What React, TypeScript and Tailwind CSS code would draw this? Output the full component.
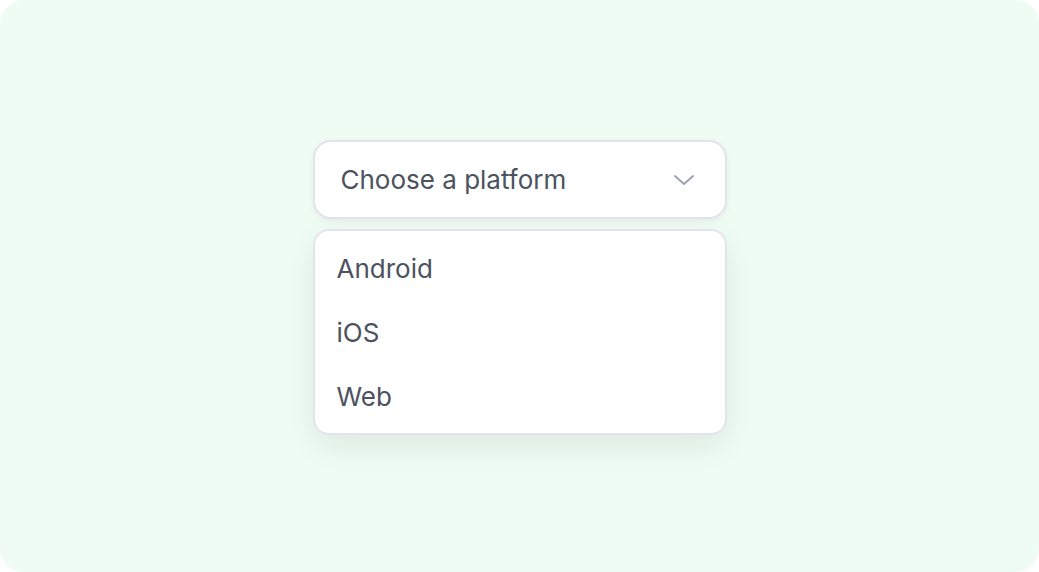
const OPTIONS = ['Android', 'iOS', 'Web'];

export default function App() {
  return (
    <div className="min-h-screen bg-white">
      <div
        className="flex h-[572px] w-[1039px] flex-col items-center rounded-[24px] bg-[#effcf3] pt-[140px]"
        style={{ fontFamily: 'Inter, "Noto Sans", sans-serif' }}
      >
        <div className="flex w-[414px] flex-col gap-[10px]">
          {/* Trigger */}
          <button className="flex h-[79px] items-center justify-between rounded-[18px] border-2 border-[#e3e4eb] bg-white pl-[26px] pr-[30px] shadow-[0_2px_6px_rgba(17,24,39,0.06)]">
            <span className="text-[26px] text-[#4b5260]">Choose a platform</span>
            <svg width="22" height="12" viewBox="0 0 22 12" fill="none" className="text-[#9aa0ab]">
              <path d="M2 2l9 8 9-8" stroke="currentColor" strokeWidth="1.8" strokeLinecap="round" strokeLinejoin="round" />
            </svg>
          </button>

          {/* Menu */}
          <ul className="flex flex-col rounded-[16px] border-2 border-[#e3e4eb] bg-white py-[5px] shadow-[0_12px_32px_rgba(17,24,39,0.08)]">
            {OPTIONS.map((o) => (
              <li key={o} className="flex h-16 items-center px-[22px] text-[26px] text-[#4b5260]">
                {o}
              </li>
            ))}
          </ul>
        </div>
      </div>
    </div>
  );
}
